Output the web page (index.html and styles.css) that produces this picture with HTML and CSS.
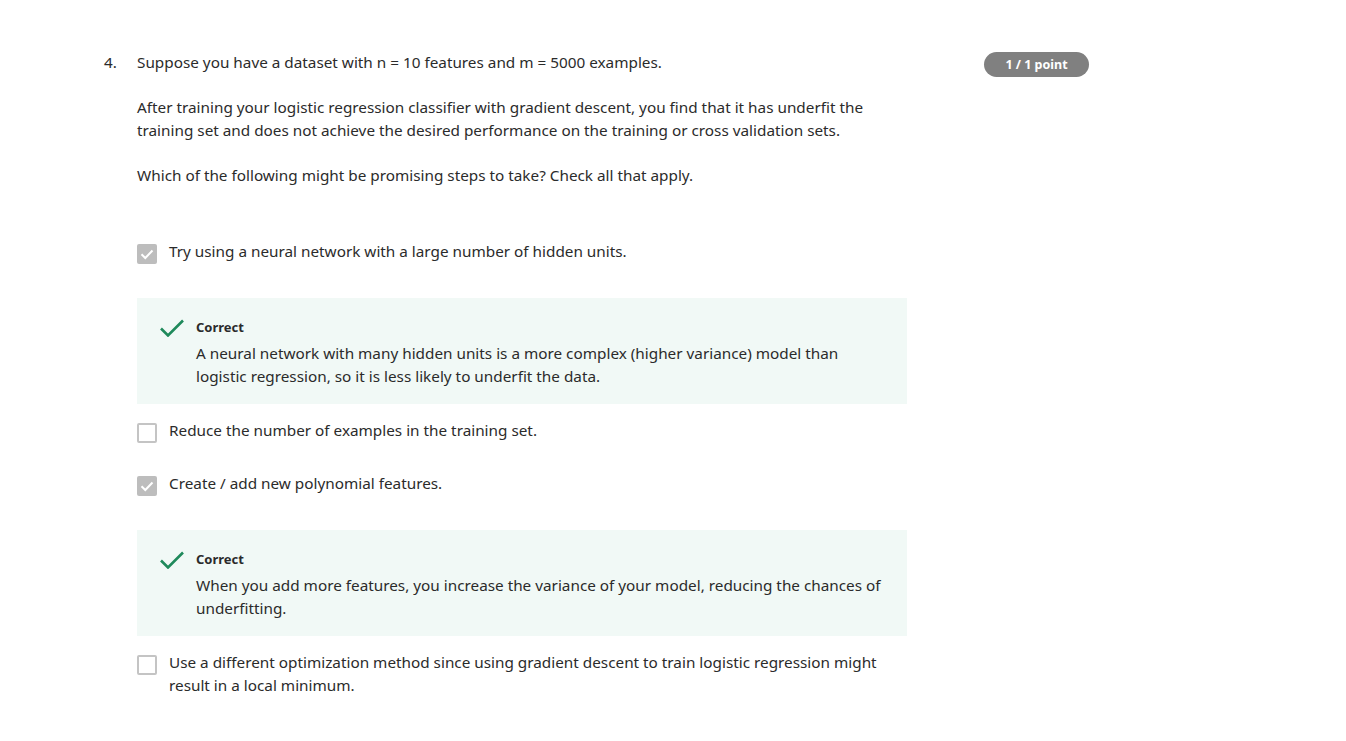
FILE: index.html
```html
<!DOCTYPE html>
<html>
<head>
<meta charset="utf-8">
<link rel="stylesheet" href="styles.css">
</head>
<body>
<div class="page">
  <div class="qnum">4.</div>
  <div class="qbody">
    <p class="prompt">Suppose you have a dataset with n = 10 features and m = 5000 examples.</p>
    <p class="prompt">After training your logistic regression classifier with gradient descent, you find that it has underfit the training set and does not achieve the desired performance on the training or cross validation sets.</p>
    <p class="prompt">Which of the following might be promising steps to take? Check all that apply.</p>

    <div class="choices">
      <div class="choice has-feedback">
        <div class="option">
          <span class="box checked"><svg viewBox="0 0 20 20" width="20" height="20"><path d="M4.5 10.2 L8.3 14 L15.5 6.5" fill="none" stroke="#fff" stroke-width="2"/></svg></span>
          <span class="label">Try using a neural network with a large number of hidden units.</span>
        </div>
        <div class="feedback">
          <svg class="tick" viewBox="0 0 24 18" width="24" height="18"><path d="M1 9.5 L8 16.5 L23 1.5" fill="none" stroke="#1f8a5b" stroke-width="2.6"/></svg>
          <div class="fb-body">
            <div class="fb-title">Correct</div>
            <div class="fb-text">A neural network with many hidden units is a more complex (higher variance) model than logistic regression, so it is less likely to underfit the data.</div>
          </div>
        </div>
      </div>

      <div class="choice">
        <div class="option">
          <span class="box"></span>
          <span class="label">Reduce the number of examples in the training set.</span>
        </div>
      </div>

      <div class="choice has-feedback">
        <div class="option">
          <span class="box checked"><svg viewBox="0 0 20 20" width="20" height="20"><path d="M4.5 10.2 L8.3 14 L15.5 6.5" fill="none" stroke="#fff" stroke-width="2"/></svg></span>
          <span class="label">Create / add new polynomial features.</span>
        </div>
        <div class="feedback">
          <svg class="tick" viewBox="0 0 24 18" width="24" height="18"><path d="M1 9.5 L8 16.5 L23 1.5" fill="none" stroke="#1f8a5b" stroke-width="2.6"/></svg>
          <div class="fb-body">
            <div class="fb-title">Correct</div>
            <div class="fb-text">When you add more features, you increase the variance of your model, reducing the chances of underfitting.</div>
          </div>
        </div>
      </div>

      <div class="choice">
        <div class="option">
          <span class="box"></span>
          <span class="label">Use a different optimization method since using gradient descent to train logistic regression might result in a local minimum.</span>
        </div>
      </div>
    </div>
  </div>
  <div class="score"><span class="badge">1 / 1 point</span></div>
</div>
</body>
</html>
```

FILE: styles.css
```css
html, body {
  margin: 0;
  padding: 0;
  background: #fff;
}
body {
  font-family: "Noto Sans", "Open Sans", sans-serif;
  font-size: 15.3px;
  line-height: 23px;
  color: #2b2b2b;
}
.page {
  display: flex;
  align-items: flex-start;
  padding: 51px 0 0 104px;
}
.qnum {
  width: 33px;
  flex: none;
}
.qbody {
  width: 770px;
  flex: none;
}
.prompt {
  margin: 0 0 22px 0;
}
.choices {
  margin-top: 53px;
}
.choice {
  margin-bottom: 30px;
}
.choice.has-feedback {
  margin-bottom: 15.5px;
}
.option {
  display: flex;
  align-items: flex-start;
}
.box {
  flex: none;
  width: 20px;
  height: 20px;
  box-sizing: border-box;
  margin-top: 3.5px;
  margin-bottom: -1px;
  margin-right: 12px;
  border: 2px solid #c4c4c4;
  border-radius: 2px;
  background: #fff;
}
.box.checked {
  border: none;
  background: #bdbdbd;
}
.box svg {
  display: block;
}
.feedback {
  margin-top: 34.5px;
  background: #f1f9f6;
  display: flex;
  align-items: flex-start;
  padding: 20px 24px 15.5px 23px;
}
.tick {
  flex: none;
  margin-right: 12px;
  margin-top: 1px;
}
.fb-title {
  font-size: 13px;
  font-weight: 700;
  line-height: 18px;
  margin-bottom: 6.5px;
}
.score {
  margin-left: 77px;
  margin-top: 1px;
}
.badge {
  display: inline-block;
  width: 105px;
  height: 25px;
  line-height: 25px;
  text-align: center;
  border-radius: 13px;
  background: #808080;
  color: #fff;
  font-size: 12.5px;
  font-weight: 700;
}
```
